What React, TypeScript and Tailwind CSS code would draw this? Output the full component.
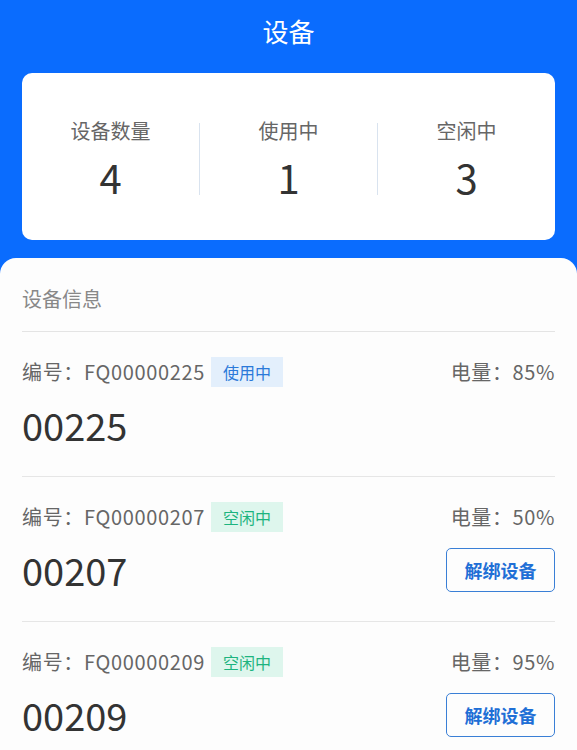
const font = { fontFamily: '"Noto Sans CJK SC", "Noto Sans", sans-serif' };

type Device = {
  code: string;
  short: string;
  battery: string;
  status: "using" | "idle";
};

const devices: Device[] = [
  { code: "FQ00000225", short: "00225", battery: "85%", status: "using" },
  { code: "FQ00000207", short: "00207", battery: "50%", status: "idle" },
  { code: "FQ00000209", short: "00209", battery: "95%", status: "idle" },
];

function Stat({ label, value }: { label: string; value: string }) {
  return (
    <div className="flex flex-1 flex-col items-center">
      <span className="text-[20px] leading-[28px] text-[#666666]">{label}</span>
      <span className="mt-[8px] text-[40px] leading-[48px] text-[#333333]">{value}</span>
    </div>
  );
}

function DeviceRow({ d }: { d: Device }) {
  return (
    <div className="border-b border-[#e6e6e6] pt-[25px] pb-[29px]">
      <div className="flex h-[30px] items-center justify-between">
        <div className="flex items-center">
          <span className="text-[20px] tracking-[0.65px] text-[#666666]">编号：{d.code}</span>
          {d.status === "using" ? (
            <span className="ml-[6px] flex h-[30px] items-center bg-[#e3effc] px-[12px] text-[16px] text-[#2a79d9]">
              使用中
            </span>
          ) : (
            <span className="ml-[6px] flex h-[30px] items-center bg-[#def6ed] px-[12px] text-[16px] text-[#1db47f]">
              空闲中
            </span>
          )}
        </div>
        <span className="text-[20px] tracking-[0.6px] text-[#666666]">电量：{d.battery}</span>
      </div>
      <div className="mt-[16px] flex h-[44px] items-center justify-between">
        <span className="text-[38px] leading-[44px] text-[#333333]">{d.short}</span>
        {d.status === "idle" && (
          <button className="flex h-[44px] w-[109px] items-center justify-center rounded-[5px] border-[1.5px] border-[#3a7fd6] text-[18px] font-bold text-[#1f6fd6]">
            解绑设备
          </button>
        )}
      </div>
    </div>
  );
}

export default function App() {
  return (
    <div className="h-[750px] w-[577px] overflow-hidden bg-[#0a6cfe]" style={font}>
      <div className="flex h-[60px] items-center justify-center">
        <span className="text-[26px] text-white">设备</span>
      </div>
      <div className="mx-[22px] mt-[13px] flex items-center rounded-[10px] bg-white pt-[44px] pb-[39px]">
        <Stat label="设备数量" value="4" />
        <div className="h-[72px] w-px bg-[#d9e3ef]" />
        <Stat label="使用中" value="1" />
        <div className="h-[72px] w-px bg-[#d9e3ef]" />
        <Stat label="空闲中" value="3" />
      </div>
      <div className="mt-[18px] min-h-[500px] rounded-t-[16px] bg-[#fdfdfd] px-[22px] pt-[27px]">
        <div className="border-b border-[#e4e4e4] pb-[19px] text-[20px] leading-[27px] text-[#888888]">
          设备信息
        </div>
        {devices.map((d) => (
          <DeviceRow key={d.code} d={d} />
        ))}
      </div>
    </div>
  );
}
